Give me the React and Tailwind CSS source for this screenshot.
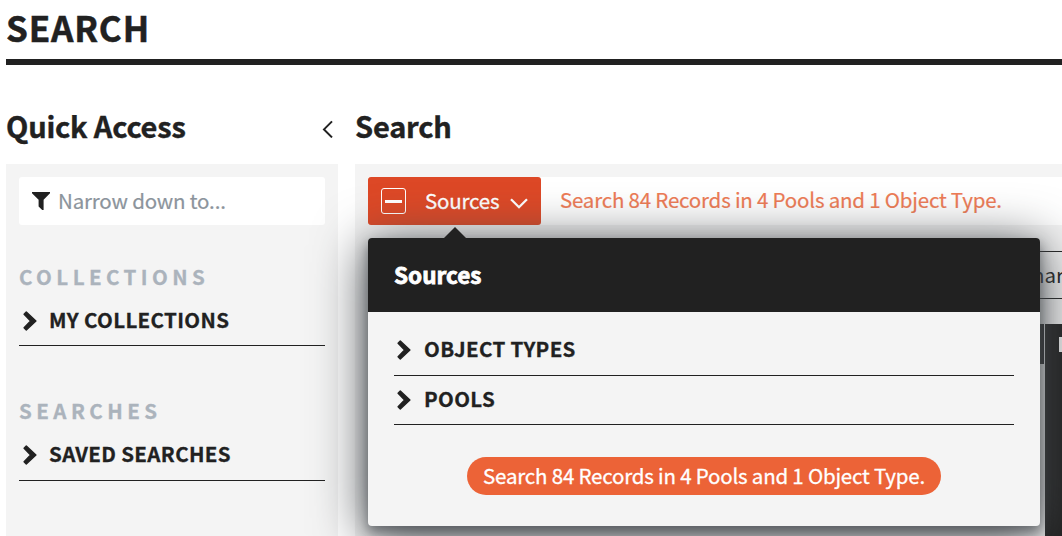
import React from "react";

function Chevron({ className = "" }) {
  return (
    <svg className={"relative block h-5 w-[14px] shrink-0 " + className} viewBox="0 0 14 20" fill="#212121" stroke="#212121" strokeWidth="1.4" strokeLinejoin="round">
      <path d="M3.3 0.9 L12.9 10 L3.3 19.1 L1.1 16.7 L7.6 10 L1.1 3.3 Z" />
    </svg>
  );
}

function Row({ label, className, iconClass = "ml-[3px] mr-[13px]", labelClass = "-top-0.5" }) {
  return (
    <div className={"flex items-center border-b border-[#212121] text-[20.5px] font-bold text-[#212121] " + className}>
      <Chevron className={iconClass} />
      <span className={"relative leading-[30px] tracking-[0.35px] [-webkit-text-stroke:0.3px_#212121] " + labelClass}>{label}</span>
    </div>
  );
}

function Sidebar() {
  return (
    <aside className="flex w-[332px] flex-col">
      <div className="flex h-[99px] items-start justify-between pt-[42px]">
        <h2 className="text-[29px] leading-[36px] font-bold tracking-[-0.2px] whitespace-nowrap [-webkit-text-stroke:0.4px_#212121]">Quick Access</h2>
        <svg className="mt-[13px] mr-[4px] h-[18px] w-[12px]" viewBox="0 0 12 18" fill="none" stroke="#212121" strokeWidth="2">
          <path d="M10 1.4 L2 9.4 L10 17.4" />
        </svg>
      </div>
      <div className="flex-1 bg-[#f4f4f4] p-[13px]">
        <div className="flex h-12 items-center rounded-[3px] bg-white pl-[13px]">
          <svg className="h-[18px] w-[18px]" viewBox="0 0 18 18" fill="#212121">
            <path d="M0 0 H18 V1.2 L11.6 7.8 V18 H10.2 L6.6 14.6 V7.8 L0 1.2 Z" />
          </svg>
          <span className="relative -top-px ml-[8px] text-[20.5px] leading-[30px] tracking-[-0.18px] text-[#8c949c] [-webkit-text-stroke:0.2px_#8c949c]">Narrow down to...</span>
        </div>
        <h3 className="mt-[36px] text-[20.5px] leading-[30px] font-bold tracking-[4.45px] text-[#abb3bc] [-webkit-text-stroke:0.3px_#abb3bc]">COLLECTIONS</h3>
        <Row label="MY COLLECTIONS" className="mt-[4px] h-[51px]" iconClass="ml-[4px] mr-[12px] top-px" labelClass="-top-px" />
        <h3 className="mt-[49px] text-[20.5px] leading-[30px] font-bold tracking-[4.45px] text-[#abb3bc] [-webkit-text-stroke:0.3px_#abb3bc]">SEARCHES</h3>
        <Row label="SAVED SEARCHES" className="mt-[4px] h-[52px]" iconClass="ml-[4px] mr-[12px]" labelClass="-top-[1.5px]" />
      </div>
    </aside>
  );
}

function SourcesPopover() {
  return (
    <div className="absolute top-[61px] left-0 z-10 h-[288px] w-[672px] rounded-[4px] bg-[#f4f4f4] shadow-[0_6px_12px_rgba(66,71,76,0.6),0_8px_52px_2px_rgba(70,74,78,1)]">
      <svg className="absolute -top-[11px] left-[75px] h-[12px] w-[24px]" viewBox="0 0 24 12" fill="#212121">
        <path d="M12 0 L24 12 H0 Z" />
      </svg>
      <div className="flex h-[74px] items-center rounded-t-[4px] bg-[#212121] px-[26px]">
        <span className="relative -top-px text-[22.5px] leading-[30px] font-bold text-white [-webkit-text-stroke:0.8px_white]">Sources</span>
      </div>
      <div className="flex flex-col px-[26px] pt-[13px]">
        <Row label="OBJECT TYPES" className="h-[51px]" />
        <Row label="POOLS" className="h-[49px]" />
        <button className="mt-[32px] flex h-[38px] w-[474px] items-center justify-center self-center rounded-full bg-[#ec6337] text-[20.5px] tracking-[-0.2px] text-white">
          <span className="relative -top-px leading-[30px] whitespace-nowrap [-webkit-text-stroke:0.3px_white]">Search 84 Records in 4 Pools and 1 Object Type.</span>
        </button>
      </div>
    </div>
  );
}

function SearchBar() {
  return (
    <div className="relative flex h-12 bg-white">
      <button className="flex h-12 w-[173px] items-center rounded-[3px] bg-[#dd4826] pl-[13px] text-white">
        <svg className="h-[26px] w-[25px]" viewBox="0 0 25 26" fill="none" stroke="white">
          <rect x="0.5" y="0.5" width="24" height="25" rx="2.5" />
          <path d="M4 13.5 H21" strokeWidth="3" />
        </svg>
        <span className="relative -top-px ml-[19px] text-[20.5px] leading-[30px] tracking-[-0.2px] [-webkit-text-stroke:0.3px_white]">Sources</span>
        <svg className="mt-[5px] ml-[11px] h-[11px] w-[18px]" viewBox="0 0 18 11" fill="none" stroke="white" strokeWidth="2.3">
          <path d="M1 1.2 L9 9.2 L17 1.2" />
        </svg>
      </button>
      <span className="mt-[7px] ml-[19px] text-[20.5px] leading-[30px] tracking-[-0.2px] whitespace-nowrap text-[#ee7b55] [-webkit-text-stroke:0.2px_#ee7b55]">
        Search 84 Records in 4 Pools and 1 Object Type.
      </span>
      <SourcesPopover />
    </div>
  );
}

function Results() {
  return (
    <div className="flex flex-1 flex-col">
      <div className="mt-[26px] flex h-12 justify-end border-y border-[#212121]">
        <span className="w-[30px] pt-[7px] text-[20.5px] leading-[30px]">nar</span>
      </div>
      <div className="mt-[25px] flex flex-1 justify-end">
        <div className="h-10 w-10 bg-[#212121]" />
        <div className="ml-px flex w-[17px] justify-end bg-[#212121] pt-[13px]">
          <div className="h-[15px] w-[3px] bg-[#f4f4f4]" />
        </div>
      </div>
    </div>
  );
}

export default function App() {
  return (
    <div className="flex h-[536px] w-[1062px] flex-col overflow-hidden bg-white pl-[6px] font-['Noto_Sans_CJK_SC','Noto_Sans',sans-serif] text-[#212121]">
      <header className="h-[65px] shrink-0 border-b-[6px] border-[#212121]">
        <h1 className="text-[35px] leading-[54px] font-bold tracking-[0.8px] [-webkit-text-stroke:0.5px_#212121]">SEARCH</h1>
      </header>
      <div className="flex flex-1">
        <Sidebar />
        <main className="ml-[17px] flex flex-1 flex-col">
          <div className="h-[99px] pt-[42px]">
            <h2 className="text-[29px] leading-[36px] font-bold tracking-[-0.2px] [-webkit-text-stroke:0.4px_#212121]">Search</h2>
          </div>
          <div className="flex flex-1 flex-col bg-[#f4f4f4] pt-[13px] pl-[13px]">
            <SearchBar />
            <Results />
          </div>
        </main>
      </div>
    </div>
  );
}
